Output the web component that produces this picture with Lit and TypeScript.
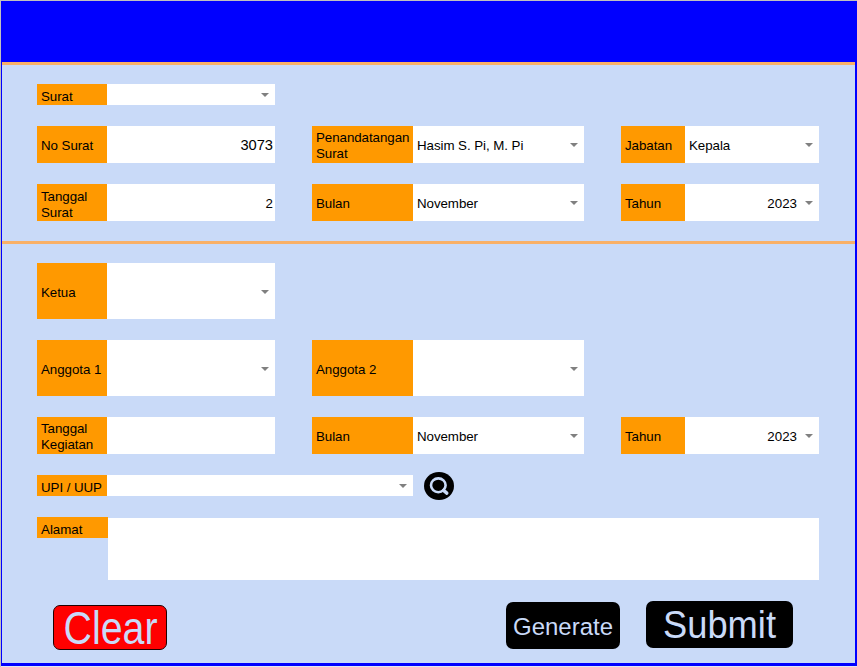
import { LitElement, html, css, nothing } from "lit";
import { customElement, property } from "lit/decorators.js";

@customElement("form-field")
class FormField extends LitElement {
  @property() label = "";
  @property() value = "";
  @property({ type: Boolean }) select = false;
  @property({ type: Boolean }) numeric = false;
  @property({ type: Boolean }) large = false;

  static styles = css`
    :host {
      display: grid;
      grid-template-columns: var(--label-width, 70px) 1fr;
      min-width: 0;
    }
    .label {
      display: flex;
      align-items: center;
      background: #ff9900;
      padding: var(--label-drop, 2px) 0 0 4px;
      line-height: 16px;
      letter-spacing: -0.06px;
      min-width: 0;
    }
    .control {
      display: flex;
      align-items: center;
      background: #fff;
      padding: var(--control-drop, 2px) 2px 0 4px;
      min-width: 0;
    }
    .value {
      flex: 1;
      line-height: 16px;
      letter-spacing: -0.06px;
      white-space: nowrap;
    }
    .numeric {
      text-align: right;
      letter-spacing: 0;
    }
    .large {
      font-size: 14.67px;
      padding-bottom: 1px;
    }
    .arrow {
      flex: none;
      width: 8px;
      height: 4px;
      margin: 0 4px 2px 8px;
      fill: #808080;
    }
  `;

  render() {
    return html`
      <div class="label"><span>${this.label}</span></div>
      <div class="control">
        <span class="value ${this.numeric ? "numeric" : ""} ${this.large ? "large" : ""}">${this.value}</span>
        ${this.select
          ? html`<svg class="arrow" viewBox="0 0 8 4"><path d="M0 0h8L4 4z" /></svg>`
          : nothing}
      </div>
    `;
  }
}

@customElement("app-root")
class AppRoot extends LitElement {
  static styles = css`
    :host {
      display: block;
      box-sizing: border-box;
      width: 857px;
      height: 667px;
      border: solid #c0c0c0;
      border-width: 1px 0 0 1px;
      background: #e4e8f0;
      font-family: "Liberation Sans", Arial, sans-serif;
      font-size: 13.33px;
      color: #000;
    }
    .sheet {
      box-sizing: border-box;
      height: 665px;
      background: #c9daf8;
      border: solid #0000ff;
      border-width: 0 2px 3px 1px;
      display: flex;
      flex-direction: column;
    }
    .banner {
      height: 61px;
      flex: none;
      background: #0000ff;
    }
    .rule {
      height: 3px;
      flex: none;
      background: #f9b067;
    }
    .section {
      display: grid;
      grid-template-columns: 238px 272px 198px;
      column-gap: 37px;
      row-gap: 21px;
      padding: 19px 0 20px 35px;
    }
    .letter {
      grid-template-rows: 21px 37px 37px;
    }
    .activity {
      grid-template-rows: 56px 56px 37px;
      padding-bottom: 21px;
    }
    .first {
      grid-column: 1;
    }
    .second {
      grid-column: 2;
      --label-width: 101px;
    }
    .third {
      grid-column: 3;
      --label-width: 64px;
    }
    .low {
      --label-drop: 4px;
    }
    .tall {
      --label-drop: 4px;
      --control-drop: 4px;
    }
    .lookup {
      display: flex;
      align-items: center;
      gap: 11px;
      height: 21px;
      margin-left: 35px;
    }
    .company {
      width: 376px;
      height: 21px;
    }
    .search {
      width: 30px;
      height: 28px;
      flex: none;
    }
    .address {
      display: grid;
      grid-template-columns: 71px 711px;
      margin: 21px 0 0 35px;
      height: 63px;
    }
    .address-label {
      box-sizing: border-box;
      height: 21px;
      background: #ff9900;
      padding: 5px 0 0 4px;
      line-height: 16px;
    }
    .address-box {
      background: #fff;
      margin-top: 1px;
    }
    .actions {
      display: flex;
      align-items: flex-start;
      margin: 21px 0 0 51px;
    }
    .actions svg {
      display: block;
      flex: none;
      overflow: visible;
    }
    .clear {
      margin-top: 4px;
    }
    .generate {
      margin: 1px 26px 0 339px;
    }
    text {
      fill: #c9daf8;
    }
  `;

  render() {
    return html`
      <div class="sheet">
        <div class="banner"></div>
        <div class="rule"></div>
        <div class="section letter">
          <form-field class="first low" label="Surat" select></form-field>
          <form-field class="first" label="No Surat" value="3073" numeric large></form-field>
          <form-field class="second" label="Penandatangan Surat" value="Hasim S. Pi, M. Pi" select></form-field>
          <form-field class="third" label="Jabatan" value="Kepala" select></form-field>
          <form-field class="first low" label="Tanggal Surat" value="2" numeric></form-field>
          <form-field class="second" label="Bulan" value="November" select></form-field>
          <form-field class="third" label="Tahun" value="2023" numeric select></form-field>
        </div>
        <div class="rule"></div>
        <div class="section activity">
          <form-field class="first tall" label="Ketua" select></form-field>
          <form-field class="first tall" label="Anggota 1" select></form-field>
          <form-field class="second tall" label="Anggota 2" select></form-field>
          <form-field class="first" label="Tanggal Kegiatan"></form-field>
          <form-field class="second" label="Bulan" value="November" select></form-field>
          <form-field class="third" label="Tahun" value="2023" numeric select></form-field>
        </div>
        <div class="lookup">
          <form-field class="company low" label="UPI / UUP" select></form-field>
          <svg class="search" viewBox="0 0 30 28">
            <ellipse cx="15" cy="14" rx="15" ry="14" />
            <ellipse cx="14.3" cy="13.3" rx="7.3" ry="6.9" fill="none" stroke="#c9daf8" stroke-width="2.6" />
            <path d="M19.6 18.4l3.2 2.7" stroke="#c9daf8" stroke-width="3.4" stroke-linecap="round" />
          </svg>
        </div>
        <div class="address">
          <div class="address-label">Alamat</div>
          <div class="address-box"></div>
        </div>
        <div class="actions">
          <svg class="clear" width="114" height="45" viewBox="0 0 114 45">
            <rect x="0.5" y="0.5" width="113" height="44" rx="6.5" fill="#ff0000" stroke="#200" />
            <text x="10.5" y="39" font-size="47" textLength="94" lengthAdjust="spacingAndGlyphs">Clear</text>
          </svg>
          <svg class="generate" width="114" height="47" viewBox="0 0 114 47">
            <rect width="114" height="47" rx="7" />
            <text x="7" y="32.5" font-size="24.5" textLength="100" lengthAdjust="spacingAndGlyphs">Generate</text>
          </svg>
          <svg class="submit" width="147" height="47" viewBox="0 0 147 47">
            <rect width="147" height="47" rx="7" />
            <text x="17" y="37" font-size="39" textLength="113" lengthAdjust="spacingAndGlyphs">Submit</text>
          </svg>
        </div>
      </div>
    `;
  }
}
